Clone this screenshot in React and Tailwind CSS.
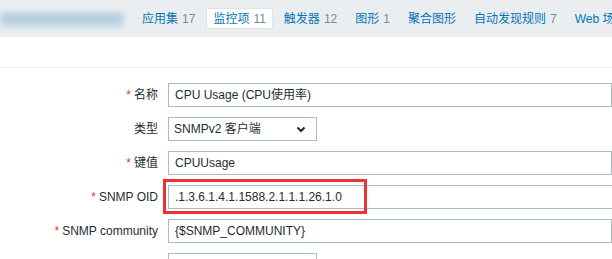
import React from 'react';

const tabs = [
  { label: '应用集', count: '17' },
  { label: '监控项', count: '11', active: true },
  { label: '触发器', count: '12' },
  { label: '图形', count: '1' },
  { label: '聚合图形', count: '' },
  { label: '自动发现规则', count: '7' },
  { label: 'Web 场景', count: '' },
];

const font = { fontFamily: '"Liberation Sans", Arial, "Noto Sans CJK SC", sans-serif' };

function Label({ text, required }) {
  return (
    <div className="w-[158px] shrink-0 text-right text-[12px] text-[#1f2c33]">
      {required && <span className="text-[#e33734] mr-[3px]">*</span>}
      {text}
    </div>
  );
}

function Row({ children, label, required }) {
  return (
    <div className="flex items-center h-[24px] gap-[10px]">
      <Label text={label} required={required} />
      {children}
    </div>
  );
}

function TextBox({ value, className = '' }) {
  return (
    <div className={`h-[24px] border border-[#acbbc0] bg-white px-[6px] flex items-center text-[12px] text-[#1f2c33] whitespace-nowrap ${className}`}>
      {value}
    </div>
  );
}

export default function App() {
  return (
    <div className="w-[612px] h-[259px] overflow-hidden bg-white" style={font}>
      <div className="h-[37px] bg-[#ebeef0] flex items-center whitespace-nowrap">
        <div className="w-[135px] h-[20px] relative shrink-0">
          <div className="absolute left-0 top-[3px] w-[124px] h-[14px] bg-[#b6cfe0] blur-[3px] rounded-sm" />
        </div>
        {tabs.map(t => (
          <div
            key={t.label}
            className={`h-[21px] px-[6px] mr-[4px] flex items-center text-[12px] border ${t.active ? 'bg-white rounded-[2px] border-[#dfe4e7]' : 'border-transparent'}`}
          >
            <span className="text-[#0275b8]">{t.label}</span>
            {t.count && <span className="text-[#768d99] ml-[4px]">{t.count}</span>}
          </div>
        ))}
      </div>
      <div className="h-[31px] border-b border-[#ebeef0]" />
      <div className="pt-[15px] flex flex-col gap-[10px]">
        <Row label="名称" required>
          <TextBox value="CPU Usage (CPU使用率)" className="w-[460px]" />
        </Row>
        <Row label="类型">
          <div className="h-[24px] w-[149px] border border-[#acbbc0] bg-white pl-[5px] pr-[10px] flex items-center justify-between text-[12px] text-[#1f2c33]">
            <span>SNMPv2 客户端</span>
            <svg width="10" height="7" viewBox="0 0 10 7" fill="none">
              <path d="M1.5 1.5 L5 5 L8.5 1.5" stroke="#1f2c33" strokeWidth="2" />
            </svg>
          </div>
        </Row>
        <Row label="键值" required>
          <TextBox value="CPUUsage" className="w-[460px]" />
        </Row>
        <Row label="SNMP OID" required>
          <div className="relative">
            <TextBox value=".1.3.6.1.4.1.1588.2.1.1.1.26.1.0" className="w-[460px]" />
            <div className="absolute left-[-5px] top-[-6px] w-[204px] h-[35px] border-[3px] border-[#ee3333]" />
          </div>
        </Row>
        <Row label="SNMP community" required>
          <TextBox value="{$SNMP_COMMUNITY}" className="w-[460px]" />
        </Row>
        <Row label="">
          <TextBox value="" className="w-[149px]" />
        </Row>
      </div>
    </div>
  );
}
